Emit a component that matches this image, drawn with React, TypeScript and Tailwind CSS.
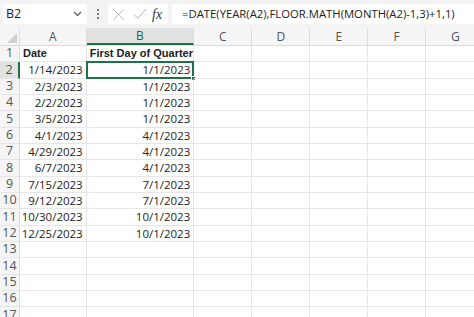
import React from "react";

const cols = [
  { l: "A", w: 66.7 },
  { l: "B", w: 107.6 },
  { l: "C", w: 58 },
  { l: "D", w: 58 },
  { l: "E", w: 58 },
  { l: "F", w: 57.7 },
  { l: "G", w: 60 },
];

const data: [string, string][] = [
  ["1/14/2023", "1/1/2023"],
  ["2/3/2023", "1/1/2023"],
  ["2/2/2023", "1/1/2023"],
  ["3/5/2023", "1/1/2023"],
  ["4/1/2023", "4/1/2023"],
  ["4/29/2023", "4/1/2023"],
  ["6/7/2023", "4/1/2023"],
  ["7/15/2023", "7/1/2023"],
  ["9/12/2023", "7/1/2023"],
  ["10/30/2023", "10/1/2023"],
  ["12/25/2023", "10/1/2023"],
];

const font = { fontFamily: '"Open Sans", "Noto Sans", sans-serif' };
const boldFont = { fontFamily: '"Liberation Sans", Arial, sans-serif' };

export default function App() {
  const rows = Array.from({ length: 17 }, (_, i) => i + 1);
  return (
    <div className="w-[474px] h-[317px] overflow-hidden bg-white text-[#222]" style={font}>
      {/* formula bar */}
      <div className="h-[28px] bg-[#f3f3f3] flex items-center pl-[3px]">
        <div className="w-[84px] h-[20px] bg-white rounded-[3px] flex items-center justify-between pl-[3px] pr-[5px] text-[12.5px]">
          <span>B2</span>
          <svg width="9" height="6" viewBox="0 0 9 6" fill="none" stroke="#555" strokeWidth="1.1">
            <path d="M1 1l3.5 3.5L8 1" />
          </svg>
        </div>
        <div className="w-[21px] flex flex-col items-center justify-center gap-[2px]">
          <div className="w-[2px] h-[2px] bg-[#555] rounded-full" />
          <div className="w-[2px] h-[2px] bg-[#555] rounded-full" />
          <div className="w-[2px] h-[2px] bg-[#555] rounded-full" />
        </div>
        <div className="w-[60px] h-[20px] bg-white rounded-[3px] flex items-center pl-[4px]">
          <svg width="13" height="13" viewBox="0 0 13 13" fill="none" stroke="#b5b5b5" strokeWidth="1">
            <path d="M1.5 1.5l10 10M11.5 1.5l-10 10" />
          </svg>
          <svg className="ml-[8px]" width="14" height="12" viewBox="0 0 14 12" fill="none" stroke="#b5b5b5" strokeWidth="1">
            <path d="M1 6.5l4 4L13 1" />
          </svg>
          <span className="ml-[5px] text-[14px] italic text-[#333]" style={{ fontFamily: '"Liberation Serif", serif' }}>
            fx
          </span>
        </div>
        <div className="flex-1 h-[20px] bg-white ml-[4px] flex items-center pl-[10px] text-[11.3px] whitespace-nowrap">
          =DATE(YEAR(A2),FLOOR.MATH(MONTH(A2)-1,3)+1,1)
        </div>
      </div>
      {/* column headers */}
      <div className="flex h-[18px] bg-[#f5f5f5] border-b border-[#dcdcdc]">
        <div className="w-[20px] shrink-0 relative border-r border-[#dcdcdc]">
          <svg className="absolute right-[2px] bottom-[2px]" width="10" height="10" viewBox="0 0 10 10">
            <path d="M10 0V10H0Z" fill="#d0d0d0" />
          </svg>
        </div>
        {cols.map((c) => (
          <div
            key={c.l}
            style={{ width: c.w }}
            className={
              c.l === "B"
                ? "shrink-0 flex items-center justify-center text-[12px] text-[#1e6b41] bg-[#e2e2e2] border-b-2 border-[#1e7145] border-r border-r-[#dcdcdc]"
                : "shrink-0 flex items-center justify-center text-[12px] text-[#555] border-r border-[#dcdcdc]"
            }
          >
            {c.l}
          </div>
        ))}
      </div>
      {/* rows */}
      {rows.map((r) => {
        const d = r >= 2 && r <= 12 ? data[r - 2] : null;
        return (
          <div key={r} className="flex h-[16.33px] text-[11.5px]">
            <div
              className={
                r === 2
                  ? "w-[20px] shrink-0 bg-[#e2e2e2] text-[#1e6b41] border-r-2 border-[#1e7145] border-b border-b-[#e6e6e6] flex items-center justify-center text-[12.5px] whitespace-nowrap"
                  : "w-[20px] shrink-0 bg-[#f5f5f5] text-[#555] border-r border-[#dcdcdc] border-b border-b-[#e6e6e6] flex items-center justify-center text-[12.5px] whitespace-nowrap"
              }
            >
              {r}
            </div>
            {cols.map((c, ci) => {
              let content: React.ReactNode = null;
              let cls = "shrink-0 border-r border-b border-[#e6e6e6] flex items-center px-[3px] leading-none whitespace-nowrap relative";
              if (r === 1 && ci === 0)
                content = (
                  <span className="font-bold text-[11px]" style={boldFont}>
                    Date
                  </span>
                );
              if (r === 1 && ci === 1)
                content = (
                  <span className="font-bold text-[11px]" style={boldFont}>
                    First Day of Quarter
                  </span>
                );
              if (d && ci === 0) {
                content = d[0];
                cls += " justify-end";
              }
              if (d && ci === 1) {
                content = d[1];
                cls += " justify-end";
              }
              return (
                <div key={c.l} style={{ width: c.w }} className={cls}>
                  {r === 2 && ci === 1 && (
                    <>
                      <div className="absolute left-[-1px] top-[-1px] right-[-1px] bottom-[-1px] border-2 border-[#1e7145]" />
                      <div className="absolute right-[-3px] bottom-[-3px] w-[5px] h-[5px] bg-[#1e7145] border border-white" />
                    </>
                  )}
                  {content}
                </div>
              );
            })}
          </div>
        );
      })}
    </div>
  );
}
